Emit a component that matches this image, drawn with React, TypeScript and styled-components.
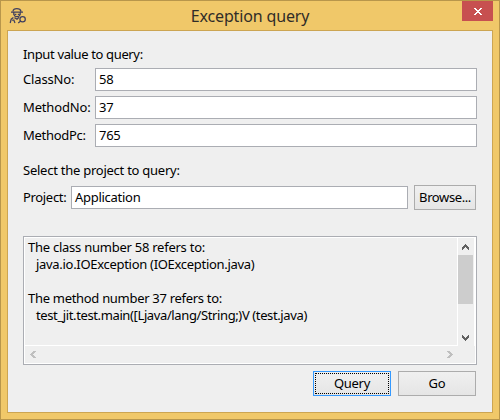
import React from 'react';
import styled, { createGlobalStyle } from 'styled-components';

const GlobalStyle = createGlobalStyle`
  * { box-sizing: border-box; }
  body { margin: 0; }
  svg { display: block; }
`;

const Window = styled.div`
  width: 500px;
  height: 420px;
  display: flex;
  flex-direction: column;
  padding: 0 6px 6px;
  border: 1px solid #b8964b;
  background: #f0c869;
  color: #000;
  font: 13px/17px 'Noto Sans', sans-serif;
`;

const TitleBar = styled.header`
  display: grid;
  grid-template-columns: 31px 1fr 31px;
  height: 29px;
  flex: none;
`;

const AppIcon = styled.svg`
  width: 18px;
  height: 18px;
  margin: 6px 0 0 2px;
`;

const Title = styled.h1`
  margin: 0;
  font-size: 16px;
  font-weight: 400;
  line-height: 30px;
  letter-spacing: -0.15px;
  text-align: center;
  color: #302d28;
`;

const CloseButton = styled.button`
  display: flex;
  align-items: flex-start;
  width: 31px;
  height: 20px;
  padding: 7px 0 0 12px;
  border: 0;
  background: #c75050;
`;

const Client = styled.main`
  flex: 1;
  min-height: 0;
  display: flex;
  flex-direction: column;
  padding: 15px 15px 0;
  border: 1px solid #cca552;
  background: #efefef;
`;

const Text = styled.span<{ $track?: number }>`
  display: block;
  white-space: pre;
  letter-spacing: ${({ $track = 0 }) => $track}px;
`;

const Fields = styled.div`
  display: grid;
  grid-template-columns: 72px 1fr;
  row-gap: 5px;
  align-items: center;
  margin: 5px 0 15px;
`;

const Input = styled.div`
  height: 23px;
  padding: 0 3px;
  border: 1px solid #abadb3;
  background: #fff;
  line-height: 21px;
`;

const ProjectRow = styled.div`
  display: grid;
  grid-template-columns: 48px 337px 62px;
  align-items: center;
  margin-top: 6px;
  & > :last-child { margin-left: 6px; }
`;

const Button = styled.button<{ $focused?: boolean; $width: number }>`
  width: ${({ $width }) => $width}px;
  height: 25px;
  padding: 1px;
  border: 1px solid ${({ $focused }) => ($focused ? '#3399ff' : '#acacac')};
  background: linear-gradient(#f0f0f0, #e5e5e5);
  color: #000;
  font: inherit;
`;

const ButtonFace = styled.span<{ $focused?: boolean }>`
  display: flex;
  height: 21px;
  align-items: center;
  justify-content: center;
  border: 1px dotted ${({ $focused }) => ($focused ? '#000' : 'transparent')};
`;

const Output = styled.section`
  display: grid;
  grid-template-columns: 1fr 17px;
  grid-template-rows: 1fr 17px;
  height: 129px;
  margin-top: 26px;
  padding: 1px;
  border: 1px solid #abadb3;
  background: linear-gradient(#efefef, #efefef) content-box, #fff;
`;

const Report = styled.div`
  padding: 1px 0 0 3px;
  border-right: 1px solid #fff;
  border-bottom: 1px solid #fff;
`;

const ReportLine = styled(Text)<{ $indent?: boolean }>`
  height: 17px;
  padding-left: ${({ $indent }) => ($indent ? 8 : 0)}px;
`;

const VScroll = styled.div`
  display: flex;
  flex-direction: column;
  border-right: 1px solid #fff;
`;

const Thumb = styled.div`
  height: 49px;
  margin-top: 17px;
  margin-right: 1px;
  background: #cdcdcd;
`;

const ArrowUp = styled.svg`
  width: 7px;
  height: 6px;
  margin: 6px 0 -12px 4px;
`;

const ArrowDown = styled(ArrowUp)`
  margin: auto 0 5px 4px;
`;

const HScroll = styled.div`
  display: flex;
  align-items: center;
  justify-content: space-between;
  padding: 0 5px;
`;

const ArrowSide = styled.svg`
  width: 6px;
  height: 7px;
`;

const Actions = styled.footer`
  display: flex;
  justify-content: flex-end;
  gap: 7px;
  margin-top: 6px;
  padding-right: 1px;
`;

const fields: { label: string; value: string; track: number }[] = [
  { label: 'ClassNo:', value: '58', track: -0.15 },
  { label: 'MethodNo:', value: '37', track: -0.15 },
  { label: 'MethodPc:', value: '765', track: -0.3 },
];

const report: { text: string; track: number; indent?: boolean }[] = [
  { text: 'The class number 58 refers to:', track: -0.25 },
  { text: 'java.io.IOException (IOException.java)', track: -0.3, indent: true },
  { text: '', track: 0 },
  { text: 'The method number 37 refers to:', track: -0.3 },
  { text: 'test_jit.test.main([Ljava/lang/String;)V (test.java)', track: -0.38, indent: true },
];

export default function App() {
  return (
    <>
      <GlobalStyle />
      <Window>
        <TitleBar>
          <AppIcon viewBox="0 0 18 18" fill="none" stroke="#41405f" strokeWidth="1.25">
            <path d="M4 4.3C4.4 0.6 11.2 0.6 12 4.3M2 5h12M4.8 5.4v2C6 10.4 10 10.4 11.2 7.4v-2M5.8 7.4h1.6M8.8 7.4h1.6M4.4 10.4 2.2 12.2 1.2 16M5.5 10.6l2.5 1.6 2-2M4.6 12.6l1.4 3.4" />
            <circle cx="13.6" cy="12.2" r="2.7" />
            <path d="m11.8 14-2.6 2M3.2 13.2l1.4.2" />
          </AppIcon>
          <Title>Exception query</Title>
          <CloseButton aria-label="Close">
            <svg width="8" height="7" viewBox="0 0 8 7" fill="#fff" shapeRendering="crispEdges">
              <path d="M0 0h2v1H0zM6 0h2v1H6zM1 1h2v1H1zM5 1h2v1H5zM2 2h4v1H2zM3 3h2v1H3zM2 4h4v1H2zM1 5h2v1H1zM5 5h2v1H5zM0 6h2v1H0zM6 6h2v1H6z" />
            </svg>
          </CloseButton>
        </TitleBar>
        <Client>
          <Text $track={-0.36}>Input value to query:</Text>
          <Fields>
            {fields.map((f) => (
              <React.Fragment key={f.label}>
                <Text $track={f.track}>{f.label}</Text>
                <Input>
                  <Text $track={-0.3}>{f.value}</Text>
                </Input>
              </React.Fragment>
            ))}
          </Fields>
          <Text $track={-0.25}>Select the project to query:</Text>
          <ProjectRow>
            <Text $track={-0.33}>Project:</Text>
            <Input>
              <Text $track={-0.28}>Application</Text>
            </Input>
            <Button $width={62}>
              <ButtonFace>
                <Text $track={-0.4}>Browse...</Text>
              </ButtonFace>
            </Button>
          </ProjectRow>
          <Output>
            <Report>
              {report.map((line, i) => (
                <ReportLine key={i} $track={line.track} $indent={line.indent}>
                  {line.text}
                </ReportLine>
              ))}
            </Report>
            <VScroll>
              <ArrowUp viewBox="0 0 7 6" fill="#606060" shapeRendering="crispEdges">
                <path d="M3 0h1v1h1v1h1v1h1v3H6V5H5V4H4V3H3v1H2v1H1v1H0V3h1V2h1V1h1z" />
              </ArrowUp>
              <Thumb />
              <ArrowDown viewBox="0 0 7 6" fill="#606060" shapeRendering="crispEdges">
                <path d="M3 6h1V5h1V4h1V3h1V0H6v1H5v1H4v1H3V2H2V1H1V0H0v3h1v1h1v1h1z" />
              </ArrowDown>
            </VScroll>
            <HScroll>
              <ArrowSide viewBox="0 0 6 7" fill="#bfbfbf" shapeRendering="crispEdges">
                <path d="M0 3h1V2h1V1h1V0h3v1H5v1H4v1H3v1h1v1h1v1h1v1H3V6H2V5H1V4H0z" />
              </ArrowSide>
              <ArrowSide viewBox="0 0 6 7" fill="#bfbfbf" shapeRendering="crispEdges">
                <path d="M6 3H5V2H4V1H3V0H0v1h1v1h1v1h1v1H2v1H1v1H0v1h3V6h1V5h1V4h1z" />
              </ArrowSide>
            </HScroll>
          </Output>
          <Actions>
            <Button $width={78} $focused>
              <ButtonFace $focused>
                <Text $track={-0.3}>Query</Text>
              </ButtonFace>
            </Button>
            <Button $width={78}>
              <ButtonFace>
                <Text $track={-0.2}>Go</Text>
              </ButtonFace>
            </Button>
          </Actions>
        </Client>
      </Window>
    </>
  );
}
